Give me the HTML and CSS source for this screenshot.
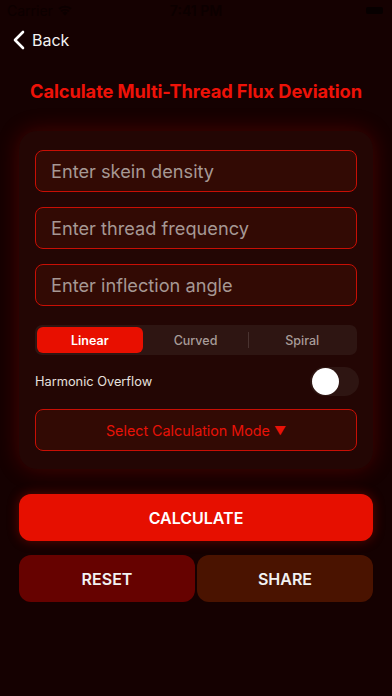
FILE: index.html
```html
<!DOCTYPE html>
<html>
<head>
<meta charset="utf-8">
<link rel="stylesheet" href="styles.css">
</head>
<body>
<div class="screen">
  <div class="status">
    <div class="status-left">Carrier
      <svg class="wifi" width="16" height="12" viewBox="0 0 16 12"><path d="M8 11.5 L5.6 8.8 A3.6 3.6 0 0 1 10.4 8.8 Z" fill="#0c0000"/><path d="M3.6 6.7 A6.4 6.4 0 0 1 12.4 6.7 L11.2 8 A4.7 4.7 0 0 0 4.8 8 Z" fill="#0c0000"/><path d="M1.4 4.3 A9.6 9.6 0 0 1 14.6 4.3 L13.4 5.6 A7.8 7.8 0 0 0 2.6 5.6 Z" fill="#0c0000"/></svg>
    </div>
    <div class="status-time">7:41 PM</div>
    <div class="status-right"><span class="battery"></span></div>
  </div>
  <div class="nav">
    <svg class="chev" width="12" height="20" viewBox="0 0 12 20"><path d="M10 2 L2 10 L10 18" fill="none" stroke="#ffffff" stroke-width="2.6" stroke-linecap="round" stroke-linejoin="round"/></svg>
    <span class="back">Back</span>
  </div>
  <h1 class="title">Calculate Multi-Thread Flux Deviation</h1>
  <div class="card">
    <div class="field">Enter skein density</div>
    <div class="field">Enter thread frequency</div>
    <div class="field">Enter inflection angle</div>
    <div class="seg">
      <div class="seg-item active">Linear</div>
      <div class="seg-item">Curved</div>
      <div class="seg-sep"></div>
      <div class="seg-item">Spiral</div>
    </div>
    <div class="row">
      <span class="row-label">Harmonic Overflow</span>
      <span class="toggle"><span class="knob"></span></span>
    </div>
    <div class="select">Select Calculation Mode <span class="tri">▼</span></div>
  </div>
  <div class="primary">CALCULATE</div>
  <div class="pair">
    <div class="btn reset">RESET</div>
    <div class="btn share">SHARE</div>
  </div>
</div>
</body>
</html>
```
FILE: styles.css
```css
html, body {
  margin: 0;
  padding: 0;
  background: #150101;
}
.screen {
  width: 392px;
  height: 696px;
  background: #150101;
  font-family: Inter, "Liberation Sans", Arial, sans-serif;
  overflow: hidden;
}
.status {
  height: 20px;
  display: flex;
  align-items: center;
  justify-content: space-between;
  padding: 0 7px;
  font-size: 14px;
  color: #0c0000;
  position: relative;
}
.status-left {
  display: flex;
  align-items: center;
  gap: 4px;
}
.status-time {
  position: absolute;
  left: 0;
  right: 0;
  text-align: center;
  font-weight: 600;
}
.battery {
  display: block;
  width: 17px;
  height: 7px;
  background: #070000;
  border-radius: 2px;
  margin-right: 2px;
}
.nav {
  height: 40px;
  display: flex;
  align-items: center;
  padding-left: 13px;
}
.chev {
  margin-right: 7px;
}
.back {
  color: #f2f2f2;
  font-size: 16px;
}
.title {
  margin: 21px 0 0;
  text-align: center;
  color: #ee1208;
  font-size: 18.3px;
  font-weight: 700;
  line-height: 20px;
  height: 20px;
  letter-spacing: -0.1px;
}
.card {
  margin: 30px 19px 0;
  padding: 19px 16px 18px;
  background: #230604;
  border-radius: 18px;
  box-shadow: 0 0 22px rgba(200, 10, 0, 0.28);
  display: flex;
  flex-direction: column;
}
.field {
  height: 40px;
  border: 1px solid #c80f05;
  border-radius: 8px;
  background: #320a04;
  color: #a69894;
  font-size: 18.2px;
  display: flex;
  align-items: center;
  padding-left: 15px;
  margin-bottom: 15px;
}
.seg {
  margin-top: 4px;
  height: 30px;
  background: #2e1512;
  border-radius: 7px;
  display: flex;
  align-items: center;
  padding: 0 2px;
}
.seg-item {
  flex: 1;
  height: 26px;
  display: flex;
  align-items: center;
  justify-content: center;
  font-size: 12.5px;
  color: #a89c99;
  font-weight: 500;
}
.seg-item.active {
  background: #e80f00;
  color: #ffffff;
  border-radius: 6px;
  font-weight: 600;
}
.seg-sep {
  width: 1px;
  height: 16px;
  background: #4a3330;
}
.row {
  margin-top: 11px;
  height: 31px;
  display: flex;
  align-items: center;
  justify-content: space-between;
}
.row-label {
  color: #e6e0de;
  font-size: 12.8px;
}
.toggle {
  width: 49px;
  height: 29px;
  border-radius: 15px;
  background: #2e1512;
  position: relative;
  margin-right: -2px;
}
.knob {
  position: absolute;
  left: 2px;
  top: 1px;
  width: 27px;
  height: 27px;
  border-radius: 50%;
  background: #ffffff;
}
.select {
  margin-top: 12px;
  height: 40px;
  border: 1px solid #c80f05;
  border-radius: 8px;
  background: #320a04;
  color: #e81208;
  font-size: 14.3px;
  display: flex;
  align-items: center;
  justify-content: center;
  gap: 4px;
}
.tri {
  font-size: 12px;
}
.primary {
  margin: 25px 19px 0;
  height: 47px;
  border-radius: 12px;
  background: #e60f00;
  color: #ffffff;
  font-size: 16px;
  font-weight: 600;
  display: flex;
  align-items: center;
  justify-content: center;
  box-shadow: 0 0 12px rgba(230, 20, 0, 0.35);
}
.pair {
  margin: 14px 19px 0;
  display: flex;
  gap: 2px;
}
.btn {
  flex: 1;
  height: 47px;
  border-radius: 12px;
  color: #f2f2f2;
  font-size: 16px;
  font-weight: 600;
  display: flex;
  align-items: center;
  justify-content: center;
}
.reset {
  background: #660200;
}
.share {
  background: #4a1300;
}
```
